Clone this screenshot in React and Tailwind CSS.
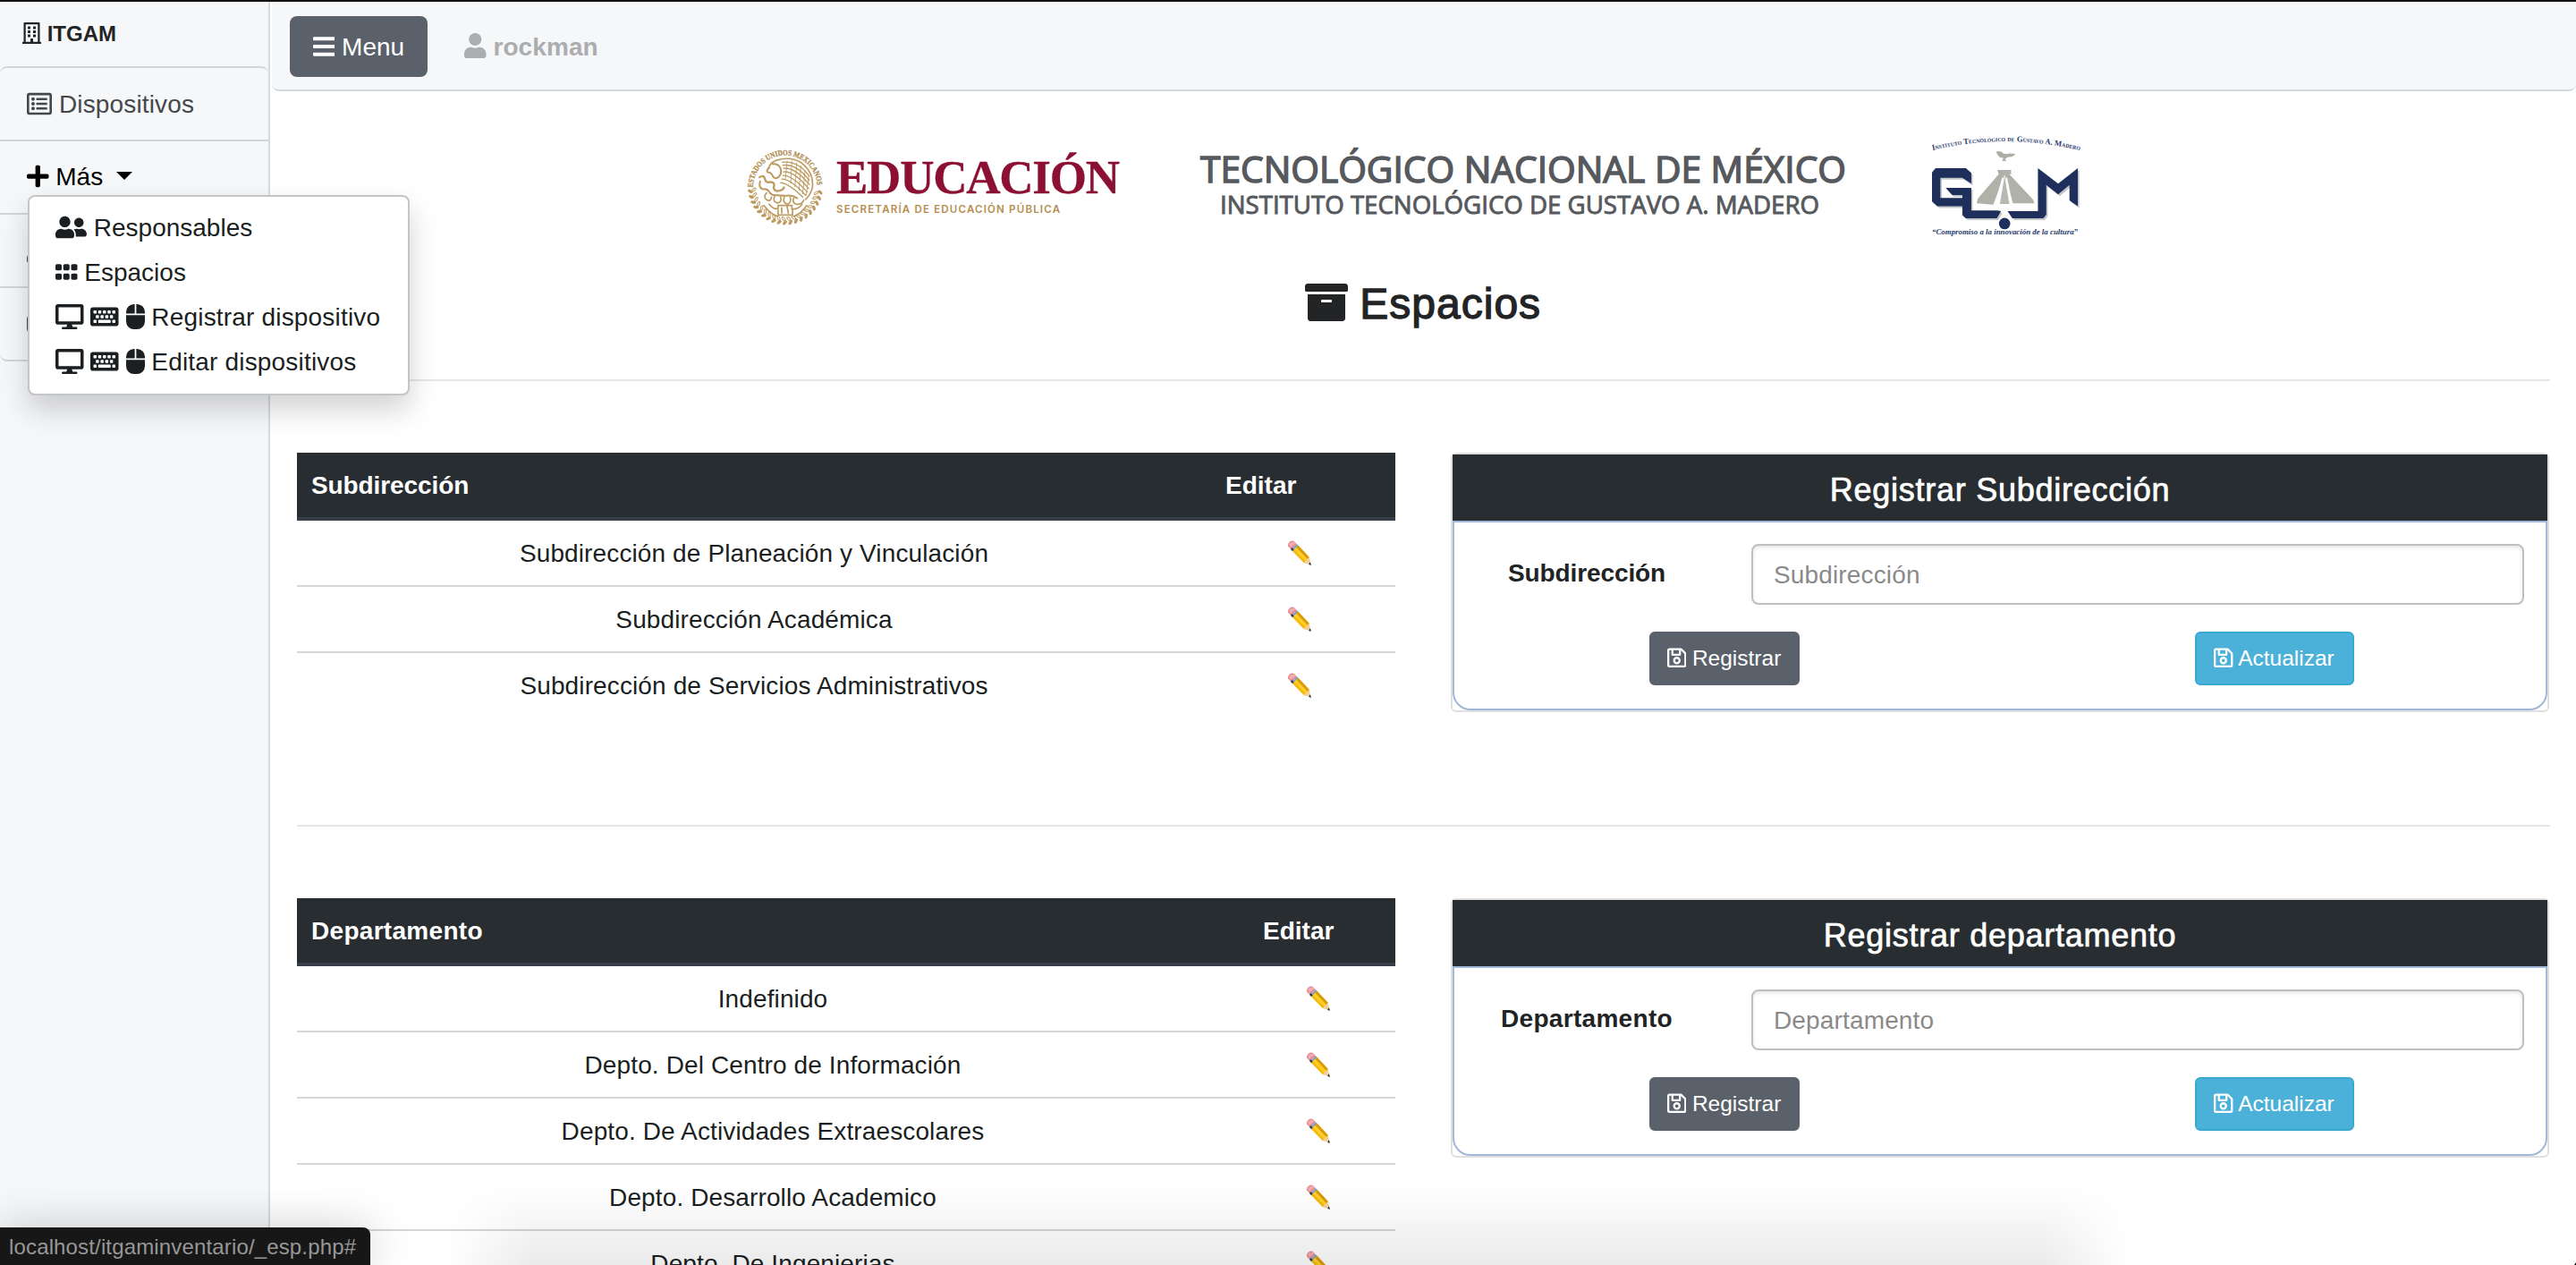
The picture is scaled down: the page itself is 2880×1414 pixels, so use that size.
import React from "react";
import {
  FaRegBuilding,
  FaRegListAlt,
  FaPlus,
  FaBars,
  FaUser,
  FaUserFriends,
  FaGripHorizontal,
  FaDesktop,
  FaKeyboard,
  FaMouse,
  FaArchive,
  FaRegSave,
  FaSignOutAlt,
} from "react-icons/fa";

const ic = "inline-block h-[1em] align-[-0.125em]";

function Pencil() {
  return (
    <svg viewBox="0 0 80 84" className="mr-[10px] inline-block h-[28px] w-[27px]">
      <path d="M3 20 Q0 12 8 5 Q16 -1 23 3 L32 13 L13 30 Z" fill="#e58a8f" />
      <path d="M6 13 Q14 2 24 6 L28 10 L10 24 Z" fill="#f2adb0" />
      <path d="M23 22 L32 12 L37 17 L18 36 L12 30 Z" fill="#7d9ac0" />
      <path d="M11 29 L16 24 L23 32 L18 37 Z" fill="#3c4048" />
      <path d="M18 37 L37 17 L74 57 L56 76 Z" fill="#f5b90f" />
      <path d="M30 24 L37 17 L74 57 L67 64 Z" fill="#d99a0b" />
      <path d="M24 31 L31 24 L68 63 L61 70 Z" fill="#ffcf26" />
      <path d="M56 76 L74 57 L79 82 Z" fill="#efcf9d" />
      <path d="M72 80 L77 73 L80 84 Z" fill="#222" />
    </svg>
  );
}

function Crest() {
  const leaves = Array.from({ length: 19 }, (_, i) => 8 + i * 9.2);
  return (
    <svg viewBox="0 0 256 260" className="ml-[-1px] h-[87px] w-[86px] overflow-visible" fill="none" stroke="#bd9a5f">
      <defs>
        <path id="crestArc" d="M20 130 A107 107 0 0 1 235 130" />
      </defs>
      <text
        fill="#b08a4c"
        stroke="#b08a4c"
        strokeWidth="0.8"
        fontFamily="Liberation Serif, serif"
        fontWeight="bold"
        fontSize="26"
        textLength="330"
        lengthAdjust="spacingAndGlyphs"
      >
        <textPath href="#crestArc">ESTADOS UNIDOS MEXICANOS</textPath>
      </text>
      {leaves.map((a) => (
        <g key={a} transform={`rotate(${a} 128 130)`}>
          <ellipse cx="246" cy="130" rx="9" ry="5" fill="#bd9a5f" stroke="none" transform="rotate(40 246 130)" />
          <ellipse cx="233" cy="134" rx="8" ry="3.5" strokeWidth="3" transform="rotate(-35 233 134)" />
        </g>
      ))}
      <g strokeWidth="4" strokeLinecap="round">
        <path d="M72 66 Q80 40 112 36 Q150 28 182 48 Q222 78 219 128 Q214 152 196 170" strokeWidth="5" />
        <path d="M86 52 Q104 50 112 66 Q118 84 104 96 Q92 104 86 92 Q80 78 70 80 Q62 76 74 64" strokeWidth="6" />
        <path d="M118 46 Q170 40 208 92 M120 56 Q164 50 208 106 M122 66 Q160 62 208 120 M122 78 Q156 74 206 134 M120 90 Q150 88 202 146 M116 102 Q146 102 196 156 M112 114 Q142 118 186 162" />
        <path d="M134 42 L128 104 M150 42 L146 116 M166 48 L160 128 M180 58 L174 140 M194 74 L186 152 M206 94 L198 156" strokeWidth="2.5" />
        <path d="M42 96 Q56 86 60 102 Q62 116 78 112 Q94 112 90 126 Q86 138 100 142 Q118 142 124 130" strokeWidth="7" />
        <path d="M44 110 Q38 130 52 136 Q66 132 74 144 Q80 158 100 156 L128 158 Q150 154 168 166" strokeWidth="6" />
        <path d="M66 148 Q52 160 66 172 Q80 178 82 162 M92 160 Q84 178 102 182 Q118 178 112 162 M124 164 Q118 182 136 186 Q150 178 144 164 M156 166 Q150 180 164 186 Q184 188 190 172" strokeWidth="5" />
        <path d="M74 186 Q90 206 104 200 L104 190 L150 190 L150 202 Q172 204 184 186 M104 206 L104 222 L152 222 L152 204 M116 198 L116 216 M134 194 L138 216" strokeWidth="5" />
        <path d="M56 190 Q80 220 100 226 M200 190 Q180 218 158 226" strokeWidth="5" />
      </g>
    </svg>
  );
}

function EducacionLogo() {
  return (
    <div className="flex h-[87px] w-[418px] items-start gap-[12px]">
      <Crest />
      <svg viewBox="0 0 320 87" className="h-[87px] w-[320px] overflow-visible">
        <text x="2" y="50" fill="#8c1033" stroke="#8c1033" strokeWidth="0.3" fontFamily="Liberation Serif, serif" fontWeight="bold" fontSize="53" textLength="317" lengthAdjust="spacing">
          EDUCACIÓN
        </text>
        <text x="2" y="71.5" fill="#b58d50" fontFamily="Inter, sans-serif" fontWeight="600" fontSize="11.5" textLength="250">
          SECRETARÍA DE EDUCACIÓN PÚBLICA
        </text>
      </svg>
    </div>
  );
}

function TecnmLogo() {
  return (
    <svg viewBox="0 0 722 90" className="h-[90px] w-[722px] overflow-visible" fill="#56595d" stroke="#56595d" fontFamily="Open Sans, sans-serif">
      <text x="-2" y="42.5" strokeWidth="1.5" fontSize="40.5" textLength="722" lengthAdjust="spacingAndGlyphs">
        TECNOLÓGICO NACIONAL DE MÉXICO
      </text>
      <text x="20" y="78" strokeWidth="0.9" fontSize="27.5" textLength="670" lengthAdjust="spacingAndGlyphs">
        INSTITUTO TECNOLÓGICO DE GUSTAVO A. MADERO
      </text>
    </svg>
  );
}

function GamShape({ fill }) {
  return (
    <g fill={fill}>
      <path d="M74 144 H176 L194 160 V196 L164 176 H90 V244 H164 V234 H130 L108 210 H194 V286 H282 L294 288 L280 312 H176 L164 302 V272 H80 L62 256 V158 Z" />
      <path d="M418 144 L486 196 L552 144 V272 L524 252 V200 L486 232 L446 200 V300 L436 312 H332 L316 288 H418 Z" />
    </g>
  );
}

function GamLogo() {
  return (
    <svg viewBox="50 30 520 345" className="h-[115px] w-[173px] overflow-visible">
      <defs>
        <path id="gamArc" d="M64 84 Q308 24 558 84" />
      </defs>
      <text fill="#27396b" fontFamily="Liberation Serif, serif" fontWeight="bold" fontSize="27" style={{ fontVariant: "small-caps" }} textLength="500" lengthAdjust="spacingAndGlyphs">
        <textPath href="#gamArc">Instituto Tecnológico de Gustavo A. Madero</textPath>
      </text>
      <path d="M278 88 Q292 84 302 94 Q312 98 322 94 L342 96 Q336 108 318 106 L308 112 L312 120 H298 L302 110 Q282 108 278 88 Z" fill="#aeaea6" />
      <path d="M282 150 H328 V164 H322 L402 250 L406 262 H334 L306 166 L268 266 L212 262 L216 246 L286 164 Z" fill="#b1b1aa" />
      <path d="M300 176 L276 264 M312 176 L330 264" stroke="#fff" strokeWidth="5" />
      <path d="M306 170 L290 264 H322 Z" fill="#b8b8b2" />
      <g transform="translate(5 6)">
        <GamShape fill="#c3c6c9" />
      </g>
      <GamShape fill="#1e2f5c" />
      <circle cx="306" cy="330" r="19" fill="#1e2f5c" />
      <text x="62" y="366" fill="#27396b" fontFamily="Liberation Serif, serif" fontStyle="italic" fontWeight="bold" fontSize="26" textLength="490" lengthAdjust="spacingAndGlyphs">
        “Compromiso a la innovación de la cultura”
      </text>
    </svg>
  );
}

function DataTable({ title, rows, editWidth, titleTracking }) {
  return (
    <div className="w-[1228px] shrink-0">
      <div className="flex h-[76px] border-b-4 border-[#383e49] bg-[#282d31] font-bold leading-[74px] text-white">
        <div className={`flex-1 pl-4 ${titleTracking}`}>{title}</div>
        <div className={`${editWidth} pl-4`}>Editar</div>
      </div>
      {rows.map((r, i) => (
        <div key={r} className={`flex text-center leading-[74px] tracking-[0.12px] ${i ? "h-[74px] border-t-2 border-[#d5d6d7]" : "h-[72px]"}`}>
          <div className="flex-1">{r}</div>
          <div className={`${editWidth} flex items-center justify-center`}>
            <Pencil />
          </div>
        </div>
      ))}
    </div>
  );
}

function FormCard({ title, label, labelTracking }) {
  return (
    <div className="flex h-[290px] w-[1228px] flex-col rounded-[6px] border-2 border-[#dfdfdf]">
      <div className="h-[74px] shrink-0 bg-[#282d31] text-center text-[36px] leading-[79px] tracking-[0.75px] text-white [-webkit-text-stroke:0.7px_#fff]">
        {title}
      </div>
      <div className="flex-1 rounded-b-[20px] border-2 border-[#a1b7d8] pt-6">
        <div className="flex">
          <div className={`w-[296px] pt-[7px] text-center font-bold leading-[52px] text-[#212325] ${labelTracking}`}>{label}</div>
          <div className="ml-9 h-[68px] w-[864px] rounded-[8px] border-2 border-[#bfbfc0] pl-[23px] leading-[66px] tracking-[0.15px] text-[#8a8a8a] shadow-[inset_0_2px_4px_rgba(0,0,0,0.1)]">
            {label}
          </div>
        </div>
        <div className="-ml-[6px] -mr-[4px] mt-[30px] grid grid-cols-2 justify-items-center text-[24.5px] leading-[56px] text-white">
          <div className="h-[60px] w-[168px] rounded-[6px] border-2 border-[#5a616a] bg-[#5a616a] text-center">
            <FaRegSave className={`${ic} w-[0.875em]`} /> Registrar
          </div>
          <div className="h-[60px] w-[178px] rounded-[6px] border-2 border-[#39a8d0] bg-[#4bb1d8] text-center">
            <FaRegSave className={`${ic} w-[0.875em]`} /> Actualizar
          </div>
        </div>
      </div>
    </div>
  );
}

function DropdownMenu() {
  return (
    <div className="absolute left-[31px] top-[216px] z-20 h-[224px] w-[427px] rounded-[8px] border-2 border-[#c4c5c7] bg-white py-[10px] pl-[29px] leading-[50px] text-[#1b1f22] shadow-[0_16px_32px_rgba(0,0,0,0.18)]">
      <div>
        <FaUserFriends className={`${ic} w-[1.25em]`} /> Responsables
      </div>
      <div>
        <FaGripHorizontal className={`${ic} w-[0.875em]`} /> Espacios
      </div>
      {["Registrar dispositivo", "Editar dispositivos"].map((t) => (
        <div key={t} className="whitespace-nowrap">
          <FaDesktop className={`${ic} w-[1.125em]`} /> <FaKeyboard className={`${ic} w-[1.125em]`} />{" "}
          <FaMouse className={`${ic} w-[0.75em]`} /> <span className="tracking-[0.18px]">{t}</span>
        </div>
      ))}
    </div>
  );
}

export default function App() {
  return (
    <div className="relative flex h-[1414px] w-[2880px] overflow-hidden border-t-2 border-[#121212] bg-white font-['Liberation_Sans',Arial,sans-serif] text-[28px] text-[#1b1f22]">
      <aside className="w-[302px] shrink-0 border-r-2 border-[#d8dadd] bg-[#f6f7f9]">
        <div className="h-[72px] pl-[25px] text-[24px] font-bold leading-[72px] text-[#222426]">
          <FaRegBuilding className={`${ic} w-[0.875em]`} /> ITGAM
        </div>
        <div className="rounded-[8px] border-y-2 border-[#d3d5d8] leading-[82px] text-[#45484b]">
          <div className="h-[80px] pl-[30px] tracking-[0.15px]">
            <FaRegListAlt className={`${ic} w-[1em]`} /> Dispositivos
          </div>
          <div className="flex h-[82px] items-center border-t-2 border-[#d3d5d8] pl-[30px] text-black">
            <span>
              <FaPlus className={`${ic} w-[0.875em]`} /> Más
            </span>
            <span className="mb-1 ml-[15px] border-x-[9px] border-t-[9px] border-x-transparent border-t-black" />
          </div>
          <div className="h-[82px] border-t-2 border-[#d3d5d8] pl-[30px]">
            <FaUser className={`${ic} w-[0.875em]`} />
          </div>
          <div className="h-[82px] border-t-2 border-[#d3d5d8] pl-[30px]">
            <FaSignOutAlt className={`${ic} w-[1em]`} />
          </div>
        </div>
      </aside>

      <div className="flex min-w-0 flex-1 flex-col">
        <header className="ml-[2px] flex h-[100px] shrink-0 items-center rounded-b-[8px] border-b-2 border-[#d5d9dd] bg-[#f6f7f9] pl-5 pt-[2px]">
          <div className="h-[68px] w-[154px] rounded-[8px] bg-[#5a616a] text-center leading-[69px] text-white">
            <FaBars className={`${ic} w-[0.875em]`} /> Menu
          </div>
          <div className="ml-[41px] font-bold leading-[69px] tracking-[0.1px] text-[#acadae]">
            <FaUser className={`${ic} w-[0.875em]`} /> rockman
          </div>
        </header>

        <main className="flex flex-col pl-[30px]">
          <div className="flex h-[173px] items-start pl-[504px] pt-[48px]">
            <div className="pt-[16px]">
              <EducacionLogo />
            </div>
            <div className="ml-[90px] pt-[11px]">
              <TecnmLogo />
            </div>
            <div className="ml-[90px]">
              <GamLogo />
            </div>
          </div>
          <h1 className="mt-[31px] h-[68px] pl-[1127px] text-[48px] leading-[68px] text-[#222426] [-webkit-text-stroke:1.3px_#222426]">
            <FaArchive className={`${ic} w-[1em] stroke-none`} /> <span className="tracking-[1px]">Espacios</span>
          </h1>
          <hr className="mt-[50px] w-[2519px] border-t-2 border-[#e6e6e7]" />
          <section className="mt-20 flex h-[416px] gap-[62px]">
            <DataTable
              title="Subdirección"
              titleTracking="tracking-[-0.1px]"
              editWidth="w-[206px]"
              rows={[
                "Subdirección de Planeación y Vinculación",
                "Subdirección Académica",
                "Subdirección de Servicios Administrativos",
              ]}
            />
            <FormCard title="Registrar Subdirección" label="Subdirección" labelTracking="tracking-[-0.1px]" />
          </section>
          <hr className="w-[2519px] border-t-2 border-[#e6e6e7]" />
          <section className="mt-20 flex h-[410px] gap-[62px]">
            <DataTable
              title="Departamento"
              titleTracking="tracking-[0.3px]"
              editWidth="w-[164px]"
              rows={[
                "Indefinido",
                "Depto. Del Centro de Información",
                "Depto. De Actividades Extraescolares",
                "Depto. Desarrollo Academico",
                "Depto. De Ingenierias",
              ]}
            />
            <FormCard title="Registrar departamento" label="Departamento" labelTracking="tracking-[0.3px]" />
          </section>
        </main>
      </div>

      <DropdownMenu />

      <div className="pointer-events-none absolute bottom-0 left-[500px] h-[90px] w-[1880px] bg-gradient-to-b from-transparent to-black/[0.08] [mask-image:linear-gradient(to_right,transparent,black_5%,black_95%,transparent)]" />
      <div className="absolute bottom-0 left-0 h-[42px] w-[414px] rounded-tr-[8px] bg-[#171717] pl-[10px] text-[24px] leading-[43px] tracking-[0.15px] text-[#979797] shadow-[0_0_50px_rgba(0,0,0,0.2)]">
        localhost/itgaminventario/_esp.php#
      </div>
      <div className="absolute bottom-0 right-0 h-[14px] w-[10px] bg-[radial-gradient(ellipse_at_top_left,transparent_88%,black_92%)]" />
    </div>
  );
}
